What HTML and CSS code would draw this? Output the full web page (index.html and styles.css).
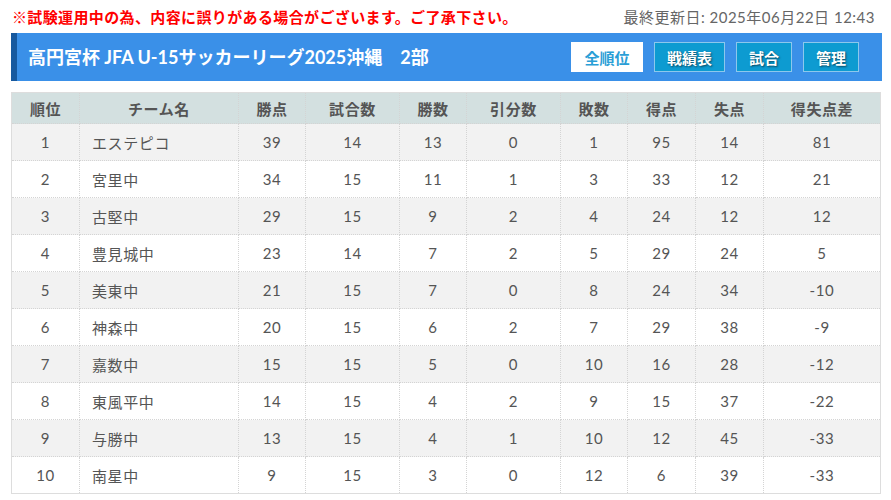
FILE: index.html
```html
<!DOCTYPE html>
<html lang="ja">
<head>
<meta charset="utf-8">
<title>高円宮杯 JFA U-15サッカーリーグ2025沖縄 2部</title>
<link rel="stylesheet" href="styles.css">
</head>
<body>
<div class="page">
  <div class="topline">
    <p class="notice">※試験運用中の為、内容に誤りがある場合がございます。ご了承下さい。</p>
    <p class="updated">最終更新日: 2025年06月22日 12:43</p>
  </div>
  <div class="titlebar">
    <h1 class="title">高円宮杯 JFA U-15サッカーリーグ2025沖縄　2部</h1>
    <nav class="tabs">
      <a class="tab tab-active">全順位</a>
      <a class="tab">戦績表</a>
      <a class="tab">試合</a>
      <a class="tab">管理</a>
    </nav>
  </div>
  <table class="standings">
    <colgroup>
      <col class="c-rank"><col class="c-team"><col class="c-s"><col class="c-m"><col class="c-s"><col class="c-m"><col class="c-s"><col class="c-s2"><col class="c-s2"><col class="c-diff">
    </colgroup>
    <thead>
      <tr><th>順位</th><th>チーム名</th><th>勝点</th><th>試合数</th><th>勝数</th><th>引分数</th><th>敗数</th><th>得点</th><th>失点</th><th>得失点差</th></tr>
    </thead>
    <tbody>
      <tr><td>1</td><td class="team">エステピコ</td><td>39</td><td>14</td><td>13</td><td>0</td><td>1</td><td>95</td><td>14</td><td>81</td></tr>
      <tr><td>2</td><td class="team">宮里中</td><td>34</td><td>15</td><td>11</td><td>1</td><td>3</td><td>33</td><td>12</td><td>21</td></tr>
      <tr><td>3</td><td class="team">古堅中</td><td>29</td><td>15</td><td>9</td><td>2</td><td>4</td><td>24</td><td>12</td><td>12</td></tr>
      <tr><td>4</td><td class="team">豊見城中</td><td>23</td><td>14</td><td>7</td><td>2</td><td>5</td><td>29</td><td>24</td><td>5</td></tr>
      <tr><td>5</td><td class="team">美東中</td><td>21</td><td>15</td><td>7</td><td>0</td><td>8</td><td>24</td><td>34</td><td>-10</td></tr>
      <tr><td>6</td><td class="team">神森中</td><td>20</td><td>15</td><td>6</td><td>2</td><td>7</td><td>29</td><td>38</td><td>-9</td></tr>
      <tr><td>7</td><td class="team">嘉数中</td><td>15</td><td>15</td><td>5</td><td>0</td><td>10</td><td>16</td><td>28</td><td>-12</td></tr>
      <tr><td>8</td><td class="team">東風平中</td><td>14</td><td>15</td><td>4</td><td>2</td><td>9</td><td>15</td><td>37</td><td>-22</td></tr>
      <tr><td>9</td><td class="team">与勝中</td><td>13</td><td>15</td><td>4</td><td>1</td><td>10</td><td>12</td><td>45</td><td>-33</td></tr>
      <tr><td>10</td><td class="team">南星中</td><td>9</td><td>15</td><td>3</td><td>0</td><td>12</td><td>6</td><td>39</td><td>-33</td></tr>
    </tbody>
  </table>
</div>
</body>
</html>
```

FILE: styles.css
```css
html, body {
  margin: 0;
  padding: 0;
  background: #fff;
}

body {
  font-family: Lato, "Noto Sans CJK JP", sans-serif;
  font-size: 15px;
  color: #555;
}

.page {
  width: 871px;
  margin-left: 11px;
}

.topline {
  height: 33px;
  display: flex;
  align-items: center;
  justify-content: space-between;
  padding-right: 7px;
}

.topline p {
  margin: 0;
  line-height: 20px;
}

.notice {
  color: #f00;
  font-weight: bold;
  padding-left: 1px;
  letter-spacing: 0.37px;
}

.updated {
  color: #666;
  letter-spacing: 0.5px;
}

.titlebar {
  height: 48px;
  box-sizing: border-box;
  background: #3a90e8;
  border-left: 6px solid #17599e;
  display: flex;
  align-items: center;
  justify-content: space-between;
  padding: 0 23px 0 11px;
}

.title {
  margin: 0;
  color: #fff;
  font-size: 18px;
  font-weight: bold;
  line-height: 24px;
}

.tabs {
  display: flex;
  gap: 11px;
}

.tab {
  display: flex;
  align-items: center;
  justify-content: center;
  height: 30px;
  box-sizing: border-box;
  padding: 0 12px;
  font-weight: bold;
  font-size: 15px;
  color: #fff;
  background: #0d9bd1;
  border: 1px solid #8cc8ec;
  text-shadow: 1px 1px 2px rgba(0, 0, 0, 0.55);
  min-width: 56px;
}

.tab-active {
  background: #fff;
  color: #2a9ed6;
  border-color: #fff;
  text-shadow: none;
  min-width: 72px;
}

.standings {
  margin-top: 11px;
  width: 870px;
  border-collapse: collapse;
  table-layout: fixed;
  border: 1px solid #ddd;
}

.c-rank { width: 68px; }
.c-team { width: 159px; }
.c-s { width: 67px; }
.c-m { width: 94px; }
.c-s2 { width: 68px; }
.c-diff { width: 117px; }

.standings th,
.standings td {
  border: 1px dotted #d4d4d4;
  text-align: center;
  padding: 0 4px;
  color: #555;
  letter-spacing: 0.6px;
}

.standings th {
  height: 30px;
  background: #d3e0e0;
  font-weight: bold;
}

.standings td {
  height: 36px;
}

.standings tbody tr:nth-child(odd) td {
  background: #f2f2f2;
}

.standings td.team {
  text-align: left;
  padding-left: 12px;
}
```
